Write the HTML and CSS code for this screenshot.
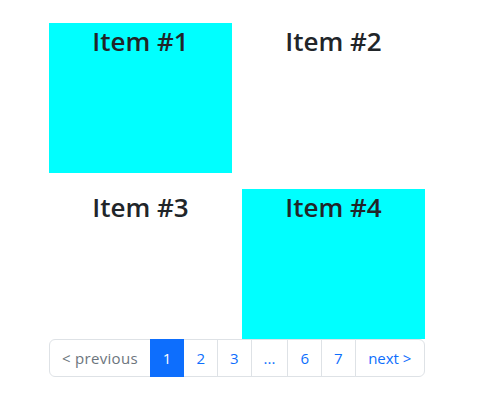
FILE: index.html
```html
<!DOCTYPE html>
<html lang="en">
<head>
<meta charset="utf-8">
<title>Items</title>
<link rel="stylesheet" href="styles.css">
</head>
<body>
<div class="wrap">
  <div class="grid">
    <div class="item filled"><h3>Item #1</h3></div>
    <div class="item"><h3>Item #2</h3></div>
    <div class="item"><h3>Item #3</h3></div>
    <div class="item filled"><h3>Item #4</h3></div>
  </div>
  <ul class="pagination">
    <li class="page disabled"><span>&lt; previous</span></li>
    <li class="page active"><span>1</span></li>
    <li class="page"><a href="#">2</a></li>
    <li class="page"><a href="#">3</a></li>
    <li class="page"><a href="#">...</a></li>
    <li class="page"><a href="#">6</a></li>
    <li class="page"><a href="#">7</a></li>
    <li class="page"><a href="#">next &gt;</a></li>
  </ul>
</div>
</body>
</html>
```
FILE: styles.css
```css
* { box-sizing: border-box; }
html, body { margin: 0; padding: 0; background: #fff; }
body {
  font-family: "Open Sans", "Noto Sans", sans-serif;
  color: #212529;
  font-size: 16px;
  line-height: 1.5;
}
.wrap {
  width: 376px;
  margin: 23px 0 0 49px;
}
.grid {
  display: grid;
  grid-template-columns: 183px 183px;
  column-gap: 10px;
  row-gap: 16px;
}
.item {
  height: 150px;
  text-align: center;
}
.item.filled { background: #00ffff; }
.item h3 {
  margin: 0;
  font-size: 26px;
  font-weight: 600;
  line-height: 1.2;
  padding-top: 3px;
}
.pagination {
  display: flex;
  list-style: none;
  margin: 0;
  padding: 0;
}
.page > a, .page > span {
  display: block;
  padding: 6px 12px;
  border: 1px solid #dee2e6;
  margin-left: -1px;
  color: #0d6efd;
  text-decoration: none;
  background: #fff;
  line-height: 24px;
  font-size: 15px;
}
.page:first-child > span {
  margin-left: 0;
  border-radius: 6px 0 0 6px;
  letter-spacing: 0.3px;
}
.page:last-child { flex: 1; }
.page:last-child > a {
  border-radius: 0 6px 6px 0;
  text-align: center;
}
.page.disabled > span { color: #6c757d; }
.page.active > span {
  background: #0d6efd;
  border-color: #0d6efd;
  color: #fff;
  position: relative;
  z-index: 1;
}
```
